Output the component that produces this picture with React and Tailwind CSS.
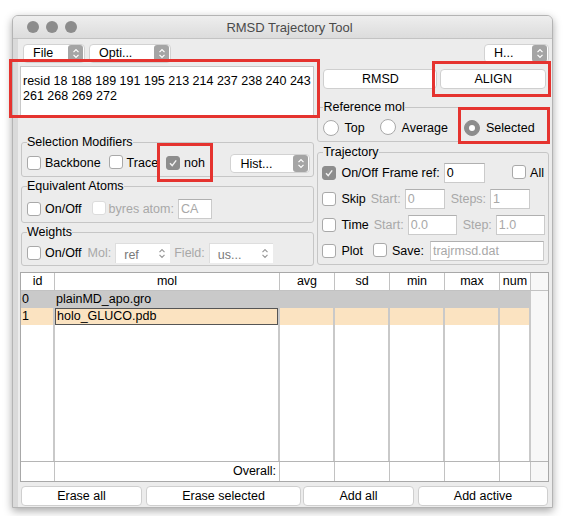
import React from 'react'

const Check = ({ checked, disabled }) => (
  <span
    className={`inline-flex items-center justify-center w-[14px] h-[14px] rounded-[3px] border shrink-0 ${
      checked ? 'bg-[#8d8d8d] border-[#8d8d8d]' : disabled ? 'bg-white border-[#dcdcdc]' : 'bg-white border-[#a9a9a9]'
    }`}
  >
    {checked && (
      <svg width="10" height="10" viewBox="0 0 10 10">
        <path d="M2 5.3 L4.2 7.6 L8.2 2.4" stroke="#f2f2f2" strokeWidth="1.4" fill="none" />
      </svg>
    )}
  </span>
)

const Radio = ({ checked }) => (
  <span
    className={`inline-flex items-center justify-center w-[16px] h-[16px] rounded-full border shrink-0 ${
      checked ? 'bg-[#8d8d8d] border-[#8d8d8d]' : 'bg-white border-[#a9a9a9]'
    }`}
  >
    {checked && <span className="w-[6px] h-[6px] rounded-full bg-white" />}
  </span>
)

const Chevrons = ({ color = 'white' }) => (
  <svg width="8" height="11" viewBox="0 0 8 11">
    <path d="M1.5 4.2 L4 1.7 L6.5 4.2 M1.5 6.8 L4 9.3 L6.5 6.8" stroke={color} strokeWidth="1.2" fill="none" />
  </svg>
)

const Stepper = () => (
  <span className="flex items-center justify-center w-[15px] h-[17px] rounded-[3px] bg-[#a5a5a5] shrink-0">
    <Chevrons />
  </span>
)

const MenuBtn = ({ label, className }) => (
  <div className={`h-[19px] flex items-center justify-between bg-white rounded-[4px] border border-[#d2d2d2] pl-[9px] pr-[1px] ${className}`}>
    <span>{label}</span>
    <Stepper />
  </div>
)

const Field = ({ value, className, muted }) => (
  <div className={`h-[20px] bg-white border border-[#cbcbcb] border-t-[#b0b0b0] px-[2px] flex items-center ${muted ? 'text-[#a8a8a8]' : 'text-black'} ${className}`}>
    {value}
  </div>
)

// fieldset keeps no padding so the legend sits near the left corner
const Group = ({ title, className, inner, children }) => (
  <fieldset className={`border border-[#c6c6c6] rounded-[3px] ${className}`}>
    <legend className="ml-[5px] leading-[14px]">{title}</legend>
    <div className={inner}>{children}</div>
  </fieldset>
)

const Button = ({ label, className }) => (
  <div className={`h-[20px] flex items-center justify-center bg-white border border-[#cfcfcf] rounded-[4px] ${className}`}>
    {label}
  </div>
)

const cols = ['id', 'mol', 'avg', 'sd', 'min', 'max', 'num']
const widths = ['w-[34px]', 'w-[225px]', 'w-[55px]', 'w-[55px]', 'w-[55px]', 'w-[55px]', 'w-[31px]']

const MolTable = () => (
  <div className="mt-[6px] h-[210px] border border-[#a8a8a8] bg-white flex flex-col">
    <div className="flex h-[18px] border-b border-[#c2c2c2]">
      {cols.map((c, i) => (
        <div key={c} className={`${widths[i]} border-r border-[#c2c2c2] flex items-center justify-center`}>
          {c}
        </div>
      ))}
      <div className="flex-1 bg-[#f7f7f7]" />
    </div>
    <div className="flex flex-1">
      {cols.map((c, i) => (
        <div key={c} className={`${widths[i]} border-r-2 border-[#c9c9c9] flex flex-col`}>
          <div className="h-[17px] bg-[#c9c9c9] flex items-center pl-[1px]">
            {c === 'id' ? '0' : c === 'mol' ? 'plainMD_apo.gro' : ''}
          </div>
          <div className={`h-[17px] bg-[#fbe3c1] flex items-center pl-[1px] ${c === 'mol' ? 'border border-[#555]' : ''}`}>
            {c === 'id' ? '1' : c === 'mol' ? 'holo_GLUCO.pdb' : ''}
          </div>
        </div>
      ))}
      <div className="flex-1 bg-[#f7f7f7]" />
    </div>
    <div className="flex h-[20px] border-t border-[#b5b5b5]">
      {cols.map((c, i) => (
        <div key={c} className={`${widths[i]} border-r border-[#c2c2c2] flex items-center justify-end pr-[3px]`}>
          {c === 'mol' ? 'Overall:' : ''}
        </div>
      ))}
      <div className="flex-1 bg-[#f7f7f7]" />
    </div>
  </div>
)

export default function App() {
  return (
    <div className="relative w-[564px] h-[516px] bg-white pt-[15px] pl-[12px] text-[12.5px] text-black leading-none font-['Liberation_Sans',Arial,sans-serif]">
      <div className="w-[541px] h-[493px] rounded-t-[6px] border border-[#b4b4b4] bg-[#ececec] shadow-[0_3px_8px_rgba(0,0,0,0.35)] flex flex-col overflow-hidden">
        {/* title bar */}
        <div className="h-[23px] shrink-0 bg-gradient-to-b from-[#eeeeee] to-[#dcdcdc] border-b border-[#c3c3c3] flex items-center">
          <div className="flex gap-[7px] ml-[14px]">
            <span className="w-[12px] h-[12px] rounded-full bg-[#8c8c8c]" />
            <span className="w-[12px] h-[12px] rounded-full bg-[#8c8c8c]" />
            <span className="w-[12px] h-[12px] rounded-full bg-[#8c8c8c]" />
          </div>
          <div className="flex-1 text-center text-[13px] text-[#4a4a4a] pr-[50px]">RMSD Trajectory Tool</div>
        </div>

        <div className="flex-1 flex flex-col pl-[2px] pr-[3px] border-l-[5px] border-[#dadada]">
          {/* menu row */}
          <div className="flex items-center mt-[4px] h-[20px]">
            <MenuBtn label="File" className="w-[62px] ml-[3px]" />
            <MenuBtn label="Opti..." className="w-[82px] ml-[4px]" />
            <MenuBtn label="H..." className="w-[65px] ml-auto" />
          </div>

          {/* main two columns */}
          <div className="flex gap-[3px] mt-[3px]">
            <div className="w-[295px] flex flex-col">
              <div className="h-[51px] bg-white border border-[#c8c8c8] pl-[2px] pt-[7px] leading-[15px]">
                resid 18 188 189 191 195 213 214 237 238 240 243
                <br />
                261 268 269 272
              </div>

              <Group title="Selection Modifiers" className="mt-[18px] ml-[1px]" inner="pl-[5px] pr-[3px] pb-[3px]">
                <div className="flex items-center h-[20px] mt-[4px]">
                  <Check />
                  <span className="ml-[4px]">Backbone</span>
                  <span className="ml-[8px]"><Check /></span>
                  <span className="ml-[4px]">Trace</span>
                  <span className="ml-[8px]"><Check checked /></span>
                  <span className="ml-[4px]">noh</span>
                  <div className="ml-auto w-[80px] h-[19px] flex items-center justify-between bg-white rounded-[4px] border border-[#d2d2d2] pl-[9px] pr-[1px]">
                    <span className="mt-[3px]">Hist...</span>
                    <Stepper />
                  </div>
                </div>
              </Group>

              <Group title="Equivalent Atoms" className="mt-[2px] ml-[1px]" inner="pl-[5px] pr-[3px] pb-[3px]">
                <div className="flex items-center h-[20px] mt-[6px]">
                  <Check />
                  <span className="ml-[4px]">On/Off</span>
                  <span className="ml-[10px]"><Check disabled /></span>
                  <span className="ml-[3px] text-[#a8a8a8]">byres atom:</span>
                  <Field value="CA" muted className="ml-[4px] w-[34px]" />
                </div>
              </Group>

              <Group title="Weights" className="mt-[2px] ml-[1px]" inner="pl-[5px] pr-[3px] pb-[2px]">
                <div className="flex items-center h-[20px] mt-[4px]">
                  <Check />
                  <span className="ml-[4px]">On/Off</span>
                  <span className="ml-[6px] text-[#a8a8a8]">Mol:</span>
                  <div className="ml-[4px] w-[55px] h-[20px] bg-white border-l border-t border-[#dedede] flex items-center justify-between pl-[8px] pr-[4px] text-[#7a7a7a]">
                    <span className="mt-[4px]">ref</span>
                    <Chevrons color="#9a9a9a" />
                  </div>
                  <span className="ml-[4px] text-[#a8a8a8]">Field:</span>
                  <div className="ml-[4px] w-[64px] h-[20px] bg-white border-l border-t border-[#dedede] flex items-center justify-between pl-[8px] pr-[4px] text-[#7a7a7a]">
                    <span className="mt-[4px]">us...</span>
                    <Chevrons color="#9a9a9a" />
                  </div>
                </div>
              </Group>
            </div>

            <div className="w-[232px] flex flex-col">
              <div className="flex gap-[3px] mt-[3px] pl-[6px] pr-[3px]">
                <Button label="RMSD" className="w-[114px]" />
                <Button label="ALIGN" className="flex-1" />
              </div>

              <Group title="Reference mol" className="mt-[11px]" inner="pl-[5px] pb-[4px]">
                <div className="flex items-center h-[18px] mt-[5px]">
                  <Radio />
                  <span className="ml-[5px]">Top</span>
                  <span className="ml-[15px]"><Radio /></span>
                  <span className="ml-[6px]">Average</span>
                  <span className="ml-[16px]"><Radio checked /></span>
                  <span className="ml-[6px]">Selected</span>
                </div>
              </Group>

              <Group title="Trajectory" className="mt-[3px]" inner="pl-[4px] pr-[3px] pb-[3px]">
                <div className="flex flex-col gap-[6px] mt-[4px]">
                  <div className="flex items-center h-[20px]">
                    <Check checked />
                    <span className="ml-[5px]">On/Off</span>
                    <span className="ml-[4px]">Frame ref:</span>
                    <Field value="0" className="ml-[4px] w-[41px]" />
                    <span className="ml-auto"><Check /></span>
                    <span className="ml-[4px] mr-[1px]">All</span>
                  </div>
                  <div className="flex items-center h-[20px]">
                    <Check />
                    <span className="ml-[5px]">Skip</span>
                    <span className="ml-[5px] text-[#a8a8a8]">Start:</span>
                    <Field value="0" muted className="ml-[4px] w-[40px]" />
                    <span className="ml-[6px] text-[#a8a8a8]">Steps:</span>
                    <Field value="1" muted className="ml-[4px] w-[40px]" />
                  </div>
                  <div className="flex items-center h-[20px]">
                    <Check />
                    <span className="ml-[5px]">Time</span>
                    <span className="ml-[5px] text-[#a8a8a8]">Start:</span>
                    <Field value="0.0" muted className="ml-[4px] w-[49px]" />
                    <span className="ml-[6px] text-[#a8a8a8]">Step:</span>
                    <Field value="1.0" muted className="ml-[4px] w-[49px]" />
                  </div>
                  <div className="flex items-center h-[20px]">
                    <Check />
                    <span className="ml-[5px]">Plot</span>
                    <span className="ml-[10px]"><Check /></span>
                    <span className="ml-[5px]">Save:</span>
                    <Field value="trajrmsd.dat" muted className="ml-[6px] w-[114px]" />
                  </div>
                </div>
              </Group>
            </div>
          </div>

          <MolTable />

          <div className="flex mt-[4px] ml-[1px] pr-[1px]">
            <Button label="Erase all" className="w-[121px]" />
            <Button label="Erase selected" className="w-[155px] ml-[4px]" />
            <Button label="Add all" className="w-[111px] ml-[2px]" />
            <Button label="Add active" className="flex-1 ml-[4px]" />
          </div>
        </div>
      </div>

      {/* annotation boxes */}
      <div className="absolute left-[9px] top-[59px] w-[311px] h-[59px] border-[3px] border-[#e5332f]" />
      <div className="absolute left-[432px] top-[61px] w-[119px] h-[36px] border-[3px] border-[#e5332f]" />
      <div className="absolute left-[458px] top-[107px] w-[92px] h-[37px] border-[3px] border-[#e5332f]" />
      <div className="absolute left-[157px] top-[143px] w-[56px] h-[39px] border-[3px] border-[#e5332f]" />
    </div>
  )
}
